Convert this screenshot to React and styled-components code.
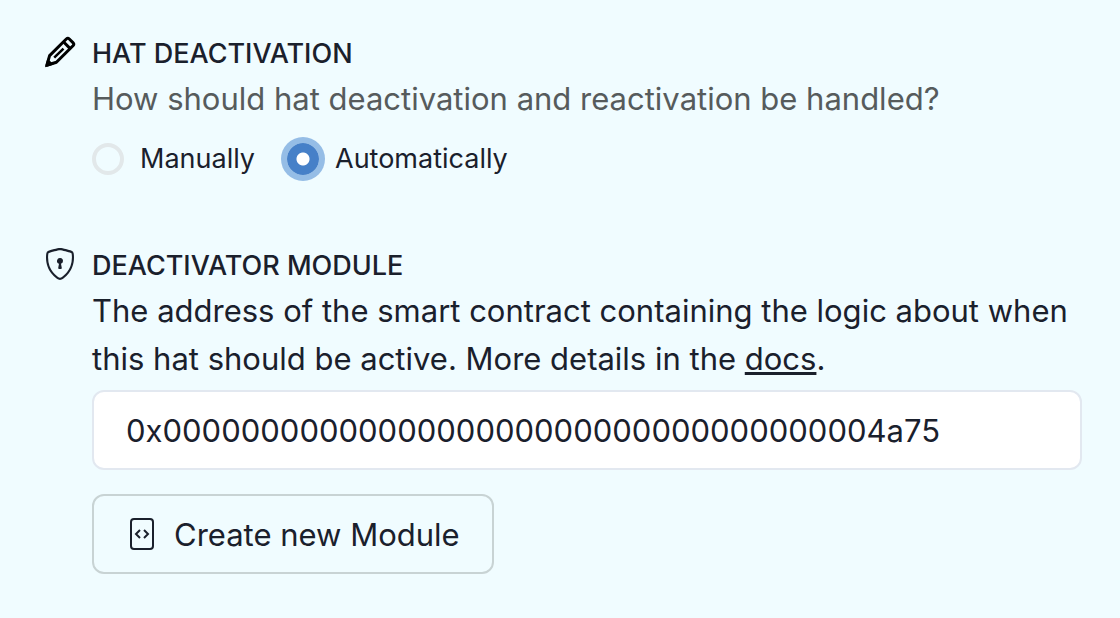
import React, { useState } from "react";
import styled, { createGlobalStyle } from "styled-components";

const GlobalStyle = createGlobalStyle`
  *, *::before, *::after { box-sizing: border-box; }
  body {
    margin: 0;
    background: #f0fcff;
    color: #1a202c;
    font-family: Inter, "Liberation Sans", sans-serif;
  }
`;

const Form = styled.form`
  display: flex;
  flex-direction: column;
  gap: 65px;
  padding: 33px 38px 44px 44px;
`;

const Section = styled.section`
  display: grid;
  grid-template-columns: 32px minmax(0, 1fr);
  column-gap: 16px;
`;

const SectionIcon = styled.svg`
  width: 32px;
  height: 32px;
  margin-top: 3px;
`;

const Content = styled.div`
  display: flex;
  flex-direction: column;
`;

const Title = styled.h2`
  margin: 0;
  font-size: 27px;
  line-height: 42px;
  font-weight: 500;
`;

const Description = styled.p`
  margin: 0;
  font-size: 31px;
  line-height: 48px;
  color: ${(p) => (p.$muted ? "#565b5c" : "#1a202c")};
`;

const DocsLink = styled.a`
  color: inherit;
  text-decoration: underline;
  text-decoration-thickness: 3px;
`;

const Choices = styled.div`
  display: flex;
  gap: 32px;
  margin-top: 15px;
`;

const Choice = styled.label`
  display: flex;
  align-items: center;
  gap: 16px;
  font-size: 27px;
  line-height: 42px;
`;

const Radio = styled.input`
  appearance: none;
  width: 32px;
  height: 32px;
  margin: 0;
  border: 4px solid #e2e8ea;
  border-radius: 50%;
  &:checked {
    border-color: #4680c8;
    background: radial-gradient(circle, #fff 6px, #4680c8 7px);
    box-shadow: 0 0 0 6px #95bde6;
  }
`;

const AddressInput = styled.input`
  width: 100%;
  height: 80px;
  margin-top: 7px;
  padding: 0 32px;
  border: 2px solid #e2e8f0;
  border-radius: 12px;
  background: #fff;
  color: inherit;
  font: inherit;
  font-size: 31px;
`;

const CreateButton = styled.button`
  display: flex;
  align-items: center;
  align-self: flex-start;
  gap: 16px;
  height: 80px;
  margin-top: 24px;
  padding: 0 32px;
  border: 2px solid #c8d3d4;
  border-radius: 12px;
  background: transparent;
  color: inherit;
  font: inherit;
  font-size: 31px;
`;

const ButtonIcon = styled.svg`
  width: 32px;
  height: 32px;
`;

export default function App() {
  const [mode, setMode] = useState("auto");
  const [address, setAddress] = useState("0x0000000000000000000000000000000000004a75");
  return (
    <>
      <GlobalStyle />
      <Form>
        <Section>
          <SectionIcon
            viewBox="0 0 32 32"
            fill="none"
            stroke="#000"
            strokeWidth="3"
            strokeLinejoin="round"
            aria-hidden="true"
          >
            <path d="M2.8 29.3L5.6 19.6L22.3 3Q23.8 1.6 25.3 3L29.2 6.9Q30.4 8.2 29 9.7L12.4 26.3Z" />
            <path d="M19.4 5.8L26.2 12.6" />
            <path d="M10.2 21.6L19.5 12.6" strokeWidth="2.6" />
            <path d="M1 31.2L3.4 22.4L9.8 28.6Z" fill="#000" stroke="none" />
          </SectionIcon>
          <Content>
            <Title>HAT DEACTIVATION</Title>
            <Description $muted>How should hat deactivation and reactivation be handled?</Description>
            <Choices role="radiogroup" aria-label="Hat deactivation">
              <Choice>
                <Radio type="radio" name="mode" checked={mode === "manual"} onChange={() => setMode("manual")} />
                Manually
              </Choice>
              <Choice>
                <Radio type="radio" name="mode" checked={mode === "auto"} onChange={() => setMode("auto")} />
                Automatically
              </Choice>
            </Choices>
          </Content>
        </Section>
        <Section>
          <SectionIcon viewBox="0 0 16 16" fill="#1a202c" aria-hidden="true">
            <path d="M5.338 1.59a61 61 0 0 0-2.837.856.48.48 0 0 0-.328.39c-.554 4.157.726 7.19 2.253 9.188a10.7 10.7 0 0 0 2.287 2.233c.346.244.652.42.893.533q.18.085.293.118a1 1 0 0 0 .101.025 1 1 0 0 0 .1-.025q.114-.034.294-.118c.24-.113.547-.29.893-.533a10.7 10.7 0 0 0 2.287-2.233c1.527-1.997 2.807-5.031 2.253-9.188a.48.48 0 0 0-.328-.39c-.651-.213-1.75-.56-2.837-.855C9.552 1.29 8.531 1.067 8 1.067c-.53 0-1.552.223-2.662.524zM5.072.56C6.157.265 7.31 0 8 0s1.843.265 2.928.56c1.11.3 2.229.655 2.887.87a1.54 1.54 0 0 1 1.044 1.262c.596 4.477-.787 7.795-2.465 9.99a11.8 11.8 0 0 1-2.517 2.453 7 7 0 0 1-1.048.625c-.28.132-.581.24-.829.24s-.548-.108-.829-.24a7 7 0 0 1-1.048-.625 11.8 11.8 0 0 1-2.517-2.453C1.928 10.487.545 7.169 1.141 2.692A1.54 1.54 0 0 1 2.185 1.43 63 63 0 0 1 5.072.56" />
            <path d="M9.5 6.5a1.5 1.5 0 0 1-1 1.415l.385 1.99a.5.5 0 0 1-.491.595h-.788a.5.5 0 0 1-.49-.595l.384-1.99a1.5 1.5 0 1 1 2-1.415" />
          </SectionIcon>
          <Content>
            <Title id="module-title">DEACTIVATOR MODULE</Title>
            <Description>
              The address of the smart contract containing the logic about when this hat should be active. More details in the <DocsLink href="#docs">docs</DocsLink>.
            </Description>
            <AddressInput aria-labelledby="module-title" value={address} onChange={(e) => setAddress(e.target.value)} />
            <CreateButton type="button">
              <ButtonIcon viewBox="0 0 32 32" fill="none" stroke="currentColor" strokeWidth="2" aria-hidden="true">
                <rect x="5" y="1" width="22" height="30" rx="3" />
                <path d="M14 12l-4 4 4 4M18 12l4 4-4 4" />
              </ButtonIcon>
              Create new Module
            </CreateButton>
          </Content>
        </Section>
      </Form>
    </>
  );
}
